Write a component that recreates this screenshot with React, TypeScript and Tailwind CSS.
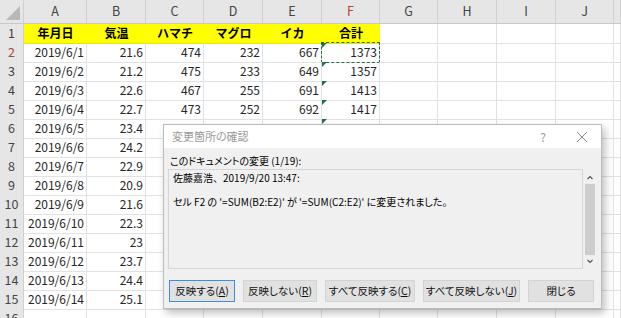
import React from 'react';

const cols = ['A', 'B', 'C', 'D', 'E', 'F', 'G', 'H', 'I', 'J', ''];
const heads = ['年月日', '気温', 'ハマチ', 'マグロ', 'イカ', '合計'];

const rows: (string | number)[][] = [
    ['2019/6/1', 21.6, 474, 232, 667, 1373],
    ['2019/6/2', 21.2, 475, 233, 649, 1357],
    ['2019/6/3', 22.6, 467, 255, 691, 1413],
    ['2019/6/4', 22.7, 473, 252, 692, 1417],
    ['2019/6/5', 23.4, 488, 239, 705, 1432],
    ['2019/6/6', 24.2, 491, 241, 698, 1430],
    ['2019/6/7', 22.9, 470, 236, 672, 1378],
    ['2019/6/8', 20.9, 462, 228, 655, 1345],
    ['2019/6/9', 21.6, 469, 234, 661, 1364],
    ['2019/6/10', 22.3, 477, 240, 680, 1397],
    ['2019/6/11', 23, 482, 244, 688, 1414],
    ['2019/6/12', 23.7, 486, 247, 699, 1432],
    ['2019/6/13', 24.4, 493, 250, 707, 1450],
    ['2019/6/14', 25.1, 499, 256, 716, 1471],
    ['', '', '', '', '', ''],
];

const grid = 'grid grid-cols-[24px_63px_59px_58px_59px_59px_58px_58px_59px_59px_58px_1fr]';

function Btn({ label, k, w, focus }: { label: string, k?: string, w: string, focus?: boolean }) {
    return (
        <div className={`${w} h-[22px] flex items-center justify-center whitespace-nowrap bg-[#e1e1e1] text-[10.5px] text-[#111] border ${focus ? 'border-[#3c8fdc]' : 'border-[#d3d3d3]'}`}>
            {label}
            {k && <span>(<span className="underline">{k}</span>)</span>}
        </div>
    );
}

export default function App() {
    return (
        <div className="relative w-[621px] h-[318px] overflow-hidden bg-white font-['Noto_Sans_CJK_JP',sans-serif] text-[#262626]">
            {/* column headers */}
            <div className={`${grid} h-[24px] bg-[#e6e6e6] border-b border-[#c8c8c8]`}>
                <div className="relative border-r border-[#d0d0d0]">
                    <div className="absolute right-[3px] bottom-[3px] w-0 h-0 border-l-[14px] border-l-transparent border-b-[14px] border-b-[#b8b8b8]"></div>
                </div>
                {cols.map((c, i) => (
                    <div key={i} className={`flex items-center justify-center text-[12.5px] border-r border-[#d0d0d0] ${c === 'F' ? 'text-[#b4413e]' : 'text-[#444]'}`}>{c}</div>
                ))}
            </div>

            {/* row 1 */}
            <div className={`${grid} h-[19px]`}>
                <div className="flex items-center justify-center bg-[#e6e6e6] border-r border-b border-[#d0d0d0] text-[12.5px] text-[#444]">1</div>
                {heads.map(h => (
                    <div key={h} className="flex items-center justify-center bg-[#ffff00] font-bold text-[12px] text-black border-b border-[#e6e600]">{h}</div>
                ))}
                {cols.slice(6).map((c, i) => <div key={i} className="border-r border-b border-[#e2e2e2]"></div>)}
            </div>

            {rows.map((r, i) => {
                const n = i + 2;
                return (
                    <div key={n} className={`${grid} h-[19px]`}>
                        <div className={`flex items-center justify-center bg-[#e6e6e6] border-r border-b border-[#d0d0d0] text-[12.5px] ${n === 2 ? 'text-[#b4413e]' : 'text-[#444]'}`}>{n}</div>
                        {r.map((v, j) => (
                            <div key={j} className="relative flex items-center justify-end border-r border-b border-[#e2e2e2] text-[12px] pr-[2px]">
                                {j === 5 && n <= 15 && (
                                    <div className="absolute left-0 top-0 w-0 h-0 border-t-[5px] border-t-[#1e7145] border-r-[5px] border-r-transparent"></div>
                                )}
                                {j === 5 && n === 2 && (
                                    <div className="absolute -left-px -top-px -right-px -bottom-px border border-dashed border-[#1e7145]"></div>
                                )}
                                {v}
                            </div>
                        ))}
                        {cols.slice(6).map((c, k) => <div key={k} className="border-r border-b border-[#e2e2e2]"></div>)}
                    </div>
                );
            })}

            {/* dialog */}
            <div className="absolute left-[163px] top-[124px] w-[439px] h-[185px] flex flex-col bg-[#f0f0f0] border border-[#bcbcbc] shadow-[3px_4px_8px_rgba(0,0,0,0.25)] text-[10px] text-black [font-feature-settings:'palt']">
                <div className="h-[23px] shrink-0 flex items-center bg-white pl-[8px]">
                    <span className="text-[#9a9a9a] text-[11px]">変更箇所の確認</span>
                    <span className="ml-auto text-[#9a9a9a] text-[12px] mr-[30px]">?</span>
                    <svg width="12" height="12" viewBox="0 0 12 12" className="mr-[13px]">
                        <path d="M1 1L11 11M11 1L1 11" stroke="#8a8a8a" strokeWidth="1" />
                    </svg>
                </div>
                <div className="h-[21px] flex items-end pl-[6px] pb-[1px] text-[10px]">このドキュメントの変更 (1/19):</div>
                <div className="flex ml-[4px] h-[100px]">
                    <div className="w-[415px] border border-[#d6d6d6] pl-[4px] pt-[1px] leading-[14px] text-[10px]">
                        <div className="[font-feature-settings:normal]">佐藤嘉浩、2019/9/20 13:47:</div>
                        <div className="h-[10px]"></div>
                        <div>セル F2 の '=SUM(B2:E2)' が '=SUM(C2:E2)' に変更されました。</div>
                    </div>
                    <div className="w-[14px] flex flex-col items-center">
                        <svg width="8" height="14" viewBox="0 0 8 14" className="mt-[1px]">
                            <path d="M1.5 9L4 6.5L6.5 9" stroke="#555" fill="none" strokeWidth="1.2" />
                        </svg>
                        <div className="w-[10px] h-[71px] bg-[#cdcdcd]"></div>
                        <svg width="8" height="14" viewBox="0 0 8 14">
                            <path d="M1.5 5L4 7.5L6.5 5" stroke="#555" fill="none" strokeWidth="1.2" />
                        </svg>
                    </div>
                </div>
                <div className="flex gap-[8px] pl-[5px] mt-[11px]">
                    <Btn label="反映する" k="A" w="w-[66px]" focus />
                    <Btn label="反映しない" k="R" w="w-[74px]" />
                    <Btn label="すべて反映する" k="C" w="w-[90px]" />
                    <Btn label="すべて反映しない" k="J" w="w-[97px]" />
                    <Btn label="閉じる" w="w-[66px]" />
                </div>
            </div>
        </div>
    );
}
